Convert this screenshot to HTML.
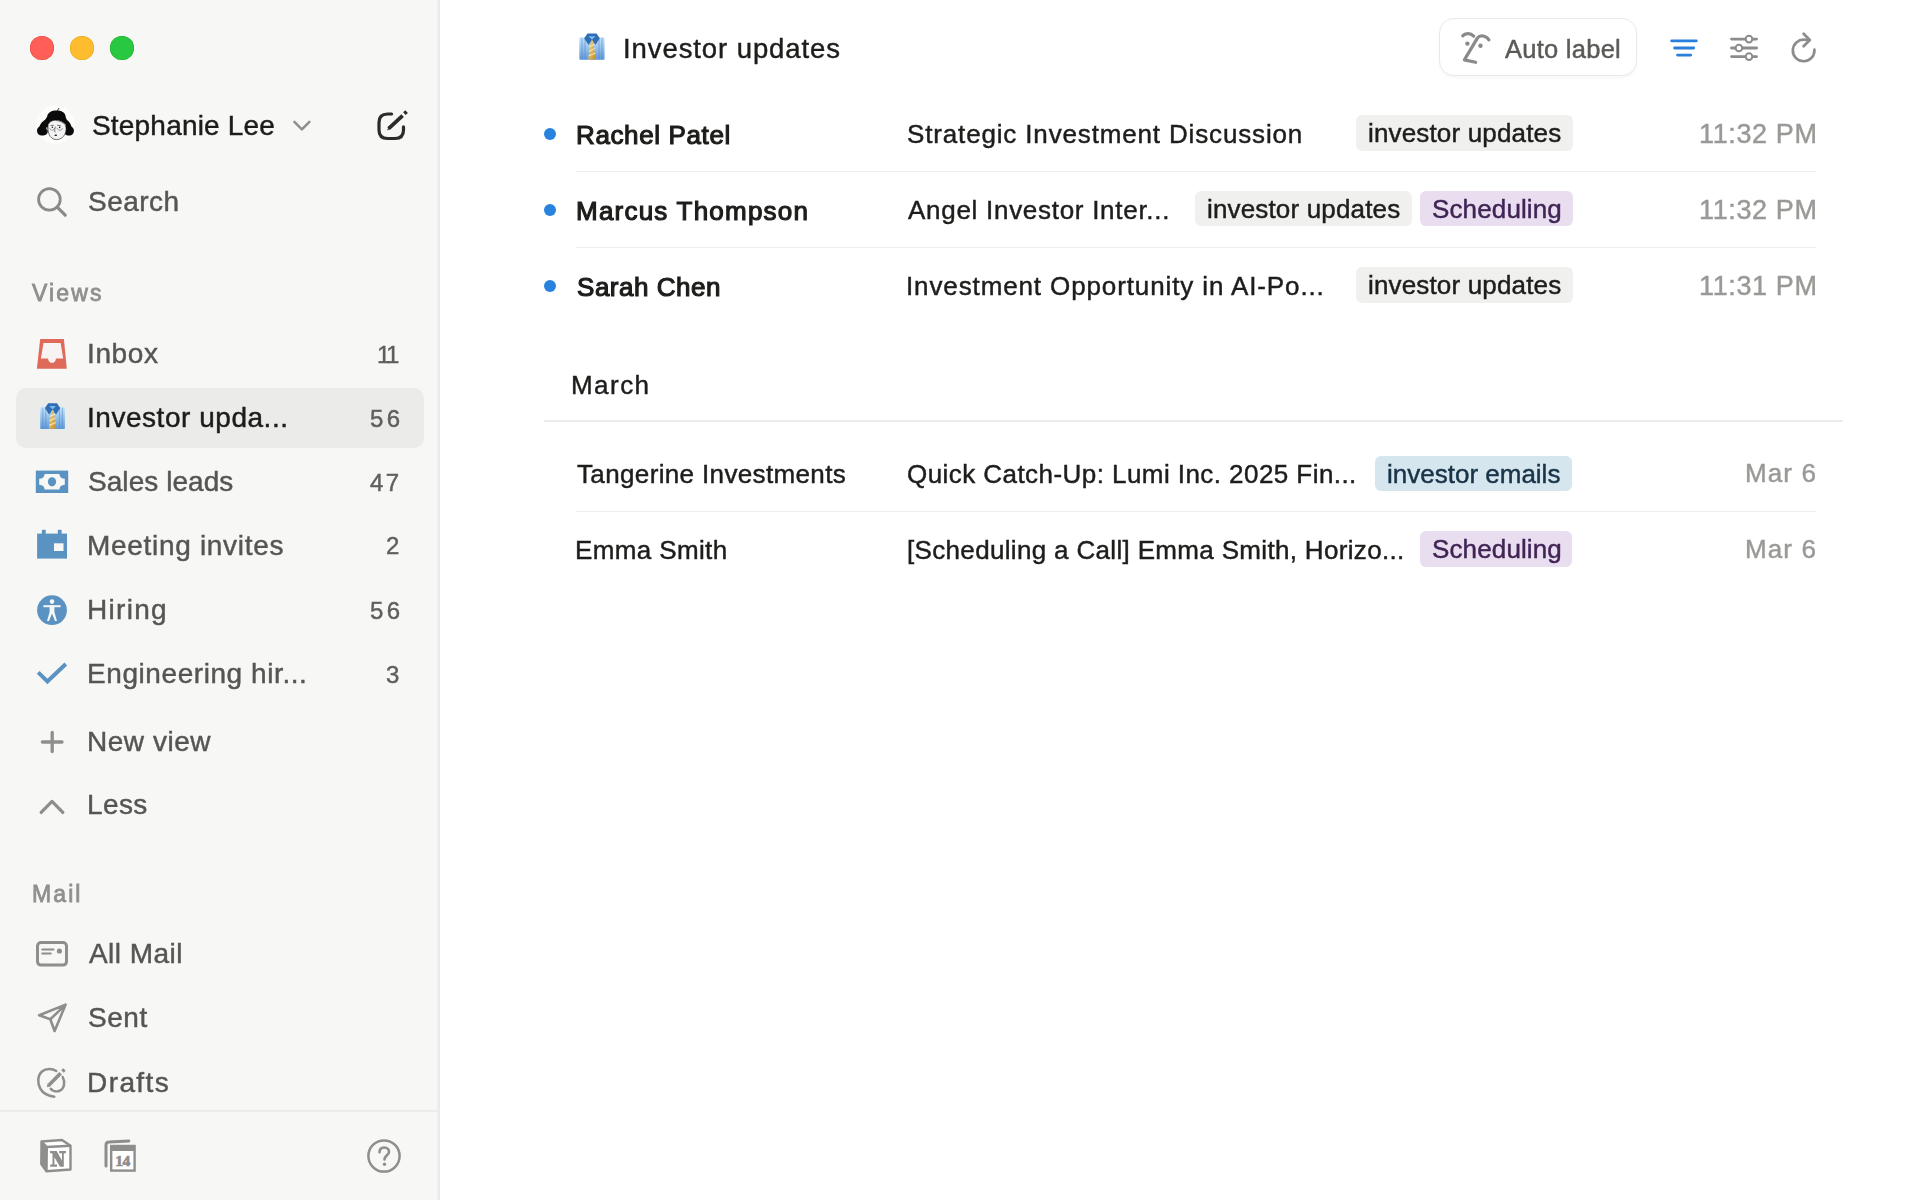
<!DOCTYPE html>
<html><head><meta charset="utf-8"><style>
html,body{margin:0;padding:0;width:1920px;height:1200px;overflow:hidden;background:#fff;}
body{position:relative;font-family:"Liberation Sans",sans-serif;}
#side{position:absolute;left:0;top:0;width:439px;height:1200px;background:#f7f7f5;}
.t{position:absolute;white-space:nowrap;will-change:transform;}
svg{overflow:visible}
</style></head><body>
<div id="side"></div><div style="position:absolute;left:437px;top:0;width:2px;height:1200px;background:linear-gradient(90deg,#f1f1ef,#ebebe9)"></div><div style="position:absolute;left:439px;top:0;width:1px;height:1200px;background:#e9e9e7"></div><div style="position:absolute;left:0;top:1110px;width:439px;height:2px;background:#ececea"></div><div style="position:absolute;left:30px;top:36px;width:24px;height:24px;border-radius:50%;background:#ff5f57;box-shadow:inset 0 0 0 0.5px #e2463f"></div><div style="position:absolute;left:70px;top:36px;width:24px;height:24px;border-radius:50%;background:#febc2e;box-shadow:inset 0 0 0 0.5px #e1a116"></div><div style="position:absolute;left:110px;top:36px;width:24px;height:24px;border-radius:50%;background:#28c840;box-shadow:inset 0 0 0 0.5px #1aab29"></div><svg style="position:absolute;left:30px;top:100px" width="50" height="50" viewBox="0 0 50 50">
<circle cx="25.6" cy="24.6" r="19.4" fill="#fdfdfc"/>
<path d="M27.2 10.8 L29.2 8" stroke="#111" stroke-width="0.9" fill="none"/>
<path d="M26.5 10.6 C31.5 10.6 35.2 12.6 35.6 16.4 C36 18 36.5 19.5 37.6 20.6 C39.5 22.2 40.8 24.5 41.6 26.8 C43.5 28 44.6 30.5 43.6 32.6 C43 34.6 41.5 35.6 39.5 35.4 C37.5 35.8 35.6 35 34.8 33.4 L35.6 24.5 C33 21.6 29 20 25 20.3 C21.5 20.6 19 22.5 18 25.5 L17.6 32.8 C16.6 34.8 14.5 35.8 12 35.4 C9.5 35.6 7.6 34.2 7.2 32 C6.6 29.8 7.6 27.8 9.4 26.6 C10.4 24 12 22 14 20.6 C15.6 19.4 16.6 17.8 17.2 16.2 C18 12.5 21.5 10.6 26.5 10.6 Z" fill="#0b0b0b"/>
<path d="M18.2 24.6 C19.5 21.6 22.5 20.2 25.5 20.4 C29.5 20.6 33.5 22.6 35.4 25 C36.4 27.5 36.4 31 35 34 C33.5 37.5 30 39.6 26.6 39.6 C23 39.6 20.2 37.4 19 34.2 C18 31.5 17.8 27.5 18.2 24.6 Z" fill="#f4f4f4" stroke="#1a1a1a" stroke-width="0.6"/>
<path d="M17.2 26.8 C15.8 27 15.6 29.6 17.6 30.6" fill="#f4f4f4" stroke="#222" stroke-width="0.5"/>
<path d="M20.5 25.6 L23.8 25.2 M27.2 25.2 L30.8 25.8" stroke="#333" stroke-width="0.7"/>
<path d="M19.6 28.2 C20 30 22 30.6 23.6 30 L24.6 27.8 M26.8 27.8 C27.4 30 29.6 30.8 31.4 30 L32.6 28" fill="none" stroke="#555" stroke-width="0.55"/>
<circle cx="22.4" cy="27.2" r="0.8" fill="#222"/><circle cx="29.6" cy="27.4" r="0.8" fill="#222"/>
<path d="M25.4 26.5 L24.5 31.6 L25.8 32" stroke="#333" stroke-width="0.55" fill="none"/>
<ellipse cx="25.8" cy="35.3" rx="1.4" ry="0.8" fill="#1a1a1a"/>
</svg><div class="t" style="font-size:28.00px;line-height:28.00px;top:112.16px;left:92.40px;color:#1c1c1a;letter-spacing:0.193px;-webkit-text-stroke-width:0.45px;">Stephanie Lee</div>
<svg style="position:absolute;left:290px;top:116px" width="24" height="18" viewBox="0 0 24 18"><path d="M4.4 5.8 L11.9 13.3 L19.4 5.8" fill="none" stroke="#8f8f8d" stroke-width="2.5" stroke-linecap="round" stroke-linejoin="round"/></svg><svg style="position:absolute;left:370px;top:104px" width="44" height="44" viewBox="370 104 44 44">
<path d="M391.6 114 H387.5 C382 114 379 117 379 122.5 V130 C379 135.5 382 138.5 387.5 138.5 H395 C400.5 138.5 403.5 135.5 403.5 130 V126.8" fill="none" stroke="#2b2b2a" stroke-width="3.2" stroke-linecap="round"/>
<path d="M388.6 128.6 L402.6 115.6" fill="none" stroke="#2b2b2a" stroke-width="3.8" stroke-linecap="butt"/>
<path d="M387 130.6 L388.9 126.6 L390.7 128.6 Z" fill="#2b2b2a"/>
<path d="M404.4 113.6 L406.6 111.6" fill="none" stroke="#2b2b2a" stroke-width="3.8" stroke-linecap="butt"/>
</svg><svg style="position:absolute;left:30px;top:180px" width="44" height="44" viewBox="0 0 44 44"><circle cx="19.4" cy="19.4" r="10.8" fill="none" stroke="#8a8a88" stroke-width="2.8"/><path d="M27.2 27.2 L35.2 35.2" stroke="#8a8a88" stroke-width="3.2" stroke-linecap="round"/></svg><div class="t" style="font-size:28.00px;line-height:28.00px;top:188.36px;left:88.20px;color:#555554;letter-spacing:0.450px;-webkit-text-stroke-width:0.45px;">Search</div>
<div class="t" style="font-size:23.00px;line-height:23.00px;top:282.28px;left:32.29px;color:#8f8f8d;letter-spacing:2.145px;-webkit-text-stroke-width:0.80px;">Views</div>
<div style="position:absolute;left:16px;top:388px;width:408px;height:60px;border-radius:10px;background:#ebebea"></div><div class="t" style="font-size:28.00px;line-height:28.00px;top:340.36px;left:87.30px;color:#555554;letter-spacing:0.618px;-webkit-text-stroke-width:0.45px;">Inbox</div>
<div class="t" style="font-size:24.00px;line-height:24.00px;top:342.55px;left:376.91px;color:#5f5f5d;letter-spacing:-2.635px;-webkit-text-stroke-width:0.45px;">11</div>
<div class="t" style="font-size:28.00px;line-height:28.00px;top:404.36px;left:87.30px;color:#1c1c1a;letter-spacing:0.533px;-webkit-text-stroke-width:0.45px;">Investor upda...</div>
<div class="t" style="font-size:24.00px;line-height:24.00px;top:406.55px;left:369.69px;color:#5f5f5d;letter-spacing:3.350px;-webkit-text-stroke-width:0.45px;">56</div>
<div class="t" style="font-size:28.00px;line-height:28.00px;top:468.36px;left:88.30px;color:#555554;letter-spacing:0.060px;-webkit-text-stroke-width:0.45px;">Sales leads</div>
<div class="t" style="font-size:24.00px;line-height:24.00px;top:470.55px;left:370.10px;color:#5f5f5d;letter-spacing:2.287px;-webkit-text-stroke-width:0.45px;">47</div>
<div class="t" style="font-size:28.00px;line-height:28.00px;top:532.16px;left:87.30px;color:#555554;letter-spacing:0.692px;-webkit-text-stroke-width:0.45px;">Meeting invites</div>
<div class="t" style="font-size:24.00px;line-height:24.00px;top:534.29px;left:386.24px;color:#5f5f5d;-webkit-text-stroke-width:0.45px;">2</div>
<div class="t" style="font-size:28.00px;line-height:28.00px;top:596.36px;left:87.30px;color:#555554;letter-spacing:1.308px;-webkit-text-stroke-width:0.45px;">Hiring</div>
<div class="t" style="font-size:24.00px;line-height:24.00px;top:598.55px;left:369.69px;color:#5f5f5d;letter-spacing:3.350px;-webkit-text-stroke-width:0.45px;">56</div>
<div class="t" style="font-size:28.00px;line-height:28.00px;top:660.36px;left:87.30px;color:#555554;letter-spacing:0.574px;-webkit-text-stroke-width:0.45px;">Engineering hir...</div>
<div class="t" style="font-size:24.00px;line-height:24.00px;top:662.50px;left:385.90px;color:#5f5f5d;-webkit-text-stroke-width:0.45px;">3</div>
<div class="t" style="font-size:28.00px;line-height:28.00px;top:728.36px;left:87.20px;color:#555554;letter-spacing:0.541px;-webkit-text-stroke-width:0.45px;">New view</div>
<div class="t" style="font-size:28.00px;line-height:28.00px;top:791.26px;left:87.20px;color:#555554;letter-spacing:0.382px;-webkit-text-stroke-width:0.45px;">Less</div>
<div class="t" style="font-size:23.00px;line-height:23.00px;top:882.58px;left:32.30px;color:#8f8f8d;letter-spacing:2.098px;-webkit-text-stroke-width:0.80px;">Mail</div>
<div class="t" style="font-size:28.00px;line-height:28.00px;top:940.36px;left:88.61px;color:#555554;letter-spacing:0.447px;-webkit-text-stroke-width:0.45px;">All Mail</div>
<div class="t" style="font-size:28.00px;line-height:28.00px;top:1003.83px;left:87.50px;color:#555554;letter-spacing:0.525px;-webkit-text-stroke-width:0.45px;">Sent</div>
<div class="t" style="font-size:28.00px;line-height:28.00px;top:1068.78px;left:86.50px;color:#555554;letter-spacing:1.418px;-webkit-text-stroke-width:0.45px;">Drafts</div>
<svg style="position:absolute;left:30px;top:330px" width="44" height="48" viewBox="30 330 44 48">
<path d="M40.2 339.1 L63.9 339.1 L66.8 368.7 L36.9 368.7 Z" fill="#e06a5a"/>
<path d="M43.5 343.1 L60.6 343.1 L63.2 358.4 L56 358.4 C55.6 361.5 54 362.8 52 362.8 C50 362.8 48.4 361.5 48 358.4 L40.9 358.4 Z" fill="#f7f3f2"/>
</svg><svg style="position:absolute;left:34.87px;top:397.72px" width="35.17" height="35.17" viewBox="0 0 36 36">
<defs><linearGradient id="sg50" x1="0" y1="0" x2="0" y2="1"><stop offset="0" stop-color="#c9e6fb"/><stop offset="1" stop-color="#5f98da"/></linearGradient>
<linearGradient id="tg50" x1="0" y1="0" x2="1" y2="1"><stop offset="0" stop-color="#f3d58a"/><stop offset="1" stop-color="#c48f25"/></linearGradient></defs>
<path d="M5.3 10.5 Q5.3 9.3 6.5 9.3 L29.4 9.3 Q30.6 9.3 30.6 10.5 L30.6 30.6 Q30.6 31.8 29.4 31.8 L6.5 31.8 Q5.3 31.8 5.3 30.6 Z" fill="url(#sg50)"/>
<path d="M8 10 V31.5 M11 10 V31.5 M25 10 V31.5 M28 10 V31.5" stroke="#4d86c8" stroke-width="0.9" opacity="0.6"/>
<path d="M10.2 10.2 L13.5 5.4 L22.5 5.4 L25.8 10.2 L21.6 16.8 L18 12.8 L14.4 16.8 Z" fill="#2f6db5"/>
<path d="M14.6 8.2 L21.4 8.2 L18 11.8 Z" fill="#7fb8ee"/>
<path d="M17 12.6 L19 12.6 L21.8 31.6 L14.2 31.6 Z" fill="url(#tg50)"/>
<path d="M15.2 19 L20.4 16.5 M14.8 23.5 L20.9 20.5 M14.5 28 L21.3 25" stroke="#fff2c8" stroke-width="1.2" opacity="0.8"/>
</svg><svg style="position:absolute;left:30px;top:465px" width="44" height="34" viewBox="30 465 44 34">
<rect x="35.8" y="470.6" width="32.4" height="22.4" fill="#5a93c2"/>
<path d="M44.6 474 L59.4 474 Q59.6 478.6 64.8 478.8 L64.8 484.8 Q59.6 485.2 59.4 489.4 L44.6 489.4 Q44.4 485.2 39.2 484.8 L39.2 478.8 Q44.4 478.6 44.6 474 Z" fill="#f7f7f5"/>
<ellipse cx="52" cy="481.8" rx="4.1" ry="4.6" fill="#5a93c2"/>
</svg><svg style="position:absolute;left:30px;top:525px" width="44" height="40" viewBox="30 525 44 40">
<rect x="37.1" y="533.6" width="29.9" height="25" fill="#5a93c2"/>
<rect x="41.9" y="529.8" width="3.8" height="5" fill="#5a93c2"/>
<rect x="57.8" y="529.8" width="3.8" height="5" fill="#5a93c2"/>
<rect x="54" y="543.3" width="9.5" height="7.7" fill="#f7f7f5"/>
</svg><svg style="position:absolute;left:30px;top:590px" width="44" height="40" viewBox="30 590 44 40">
<circle cx="52" cy="610.2" r="14.9" fill="#5a93c2"/>
<circle cx="52" cy="601.6" r="2.3" fill="#f7f7f5"/>
<path d="M43.4 606.2 L60.6 606.2" stroke="#f7f7f5" stroke-width="2" stroke-linecap="butt"/>
<path d="M49.6 605.5 L54.4 605.5 L54.4 612 L57 621 L55 621 L52 613.5 L49 621 L47 621 L49.6 612 Z" fill="#f7f7f5"/>
</svg><svg style="position:absolute;left:30px;top:655px" width="44" height="36" viewBox="30 655 44 36"><path d="M38.2 672.4 L47.4 681.4 L65.8 664" fill="none" stroke="#5a93c2" stroke-width="4" stroke-linecap="butt"/></svg><svg style="position:absolute;left:30px;top:720px" width="44" height="44" viewBox="30 720 44 44"><path d="M52.2 732.4 V751.6 M42.4 742 H62" stroke="#8e8e8c" stroke-width="3.3" stroke-linecap="round"/></svg><svg style="position:absolute;left:30px;top:790px" width="44" height="34" viewBox="30 790 44 34"><path d="M41.2 812.4 L52 801.4 L62.8 812.4" fill="none" stroke="#8e8e8c" stroke-width="3.3" stroke-linecap="round" stroke-linejoin="round"/></svg><svg style="position:absolute;left:30px;top:935px" width="44" height="38" viewBox="30 935 44 38">
<rect x="37.5" y="942.5" width="29" height="22.6" rx="3.5" fill="none" stroke="#8e8e8c" stroke-width="3"/>
<path d="M42.2 949.4 H53.5 M42.2 953.6 H50.8" stroke="#8e8e8c" stroke-width="2" stroke-linecap="round"/>
<circle cx="59.4" cy="951" r="2.6" fill="#8e8e8c"/>
</svg><svg style="position:absolute;left:30px;top:995px" width="44" height="44" viewBox="30 995 44 44">
<path d="M65.6 1004.6 L39.2 1015.3 L50.3 1019.3 L54.6 1031 Z M50.3 1019.3 L65.6 1004.6" fill="none" stroke="#8e8e8c" stroke-width="2.6" stroke-linejoin="round" stroke-linecap="round"/>
</svg><svg style="position:absolute;left:30px;top:1060px" width="44" height="44" viewBox="30 1060 44 44">
<path d="M56.3 1071 C52.5 1068.3 46 1068 42 1071.5 C37.3 1075.5 37.3 1084 40.5 1089 C43.5 1094 49 1096 54.3 1096.7" fill="none" stroke="#8e8e8c" stroke-width="2.5" stroke-linecap="round"/>
<path d="M48.8 1085.2 L60.6 1073.2" fill="none" stroke="#8e8e8c" stroke-width="3.6" stroke-linecap="butt"/>
<path d="M46.9 1087.3 L47.5 1083.4 L50.6 1086.6 Z" fill="#8e8e8c"/>
<path d="M62.4 1071.4 L64.4 1069.4" fill="none" stroke="#8e8e8c" stroke-width="3.6" stroke-linecap="butt"/>
<path d="M50.8 1088.8 C53 1091.3 57 1092 60.2 1090.5 C64.2 1088.5 65.5 1082.5 62.7 1077" fill="none" stroke="#8e8e8c" stroke-width="2.5" stroke-linecap="round"/>
</svg><svg style="position:absolute;left:36px;top:1136px" width="40" height="40" viewBox="36 1136 40 40">
<path d="M41.5 1141.5 L62 1140 L70.5 1145.8 L70.5 1169.5 L46.5 1171.3 L41.3 1164 Z" fill="#fff" stroke="#8e8e8c" stroke-width="2.4" stroke-linejoin="round"/>
<path d="M41.5 1141.5 L46.8 1147 L70.5 1145.8 M46.8 1147 L46.5 1171.3" fill="none" stroke="#8e8e8c" stroke-width="2.4" stroke-linejoin="round"/>
<path d="M42 1142.5 L46.2 1147.5 L46 1169.5 L42 1164 Z" fill="#8e8e8c"/>
<path d="M50 1151 H56.6 L62 1160.6 V1153.2 H59.2 V1151 H66 V1153.2 H63.8 V1166.8 H60 L54.4 1157.2 V1164.6 H57 V1166.8 H50.2 V1164.6 H52.5 V1153.6 L51.8 1153.2 H50 Z" fill="#8e8e8c"/>
</svg><svg style="position:absolute;left:100px;top:1136px" width="40" height="40" viewBox="100 1136 40 40">
<path d="M106 1166 L106 1145 C106 1143 107 1142 109 1142 L128.8 1141" fill="none" stroke="#8e8e8c" stroke-width="3" stroke-linecap="round"/>
<rect x="111.2" y="1146" width="23.4" height="24.6" fill="#fff" stroke="#8e8e8c" stroke-width="2.4"/>
<rect x="111.2" y="1146" width="23.4" height="5" fill="#8e8e8c"/>
<text x="122.6" y="1166" font-family="Liberation Serif" font-weight="700" font-size="15.5" fill="#8e8e8c" stroke="#8e8e8c" stroke-width="0.7" text-anchor="middle" letter-spacing="-0.5">14</text>
</svg><svg style="position:absolute;left:362px;top:1134px" width="44" height="44" viewBox="362 1134 44 44">
<circle cx="384" cy="1156" r="15.6" fill="none" stroke="#8e8e8c" stroke-width="2.5"/>
<path d="M379.5 1152.3 C379.5 1149 381.5 1147.5 384.2 1147.5 C387 1147.5 389 1149.3 389 1152 C389 1155.3 384.5 1155.5 384.5 1159.5" fill="none" stroke="#8e8e8c" stroke-width="2.6" stroke-linecap="round"/>
<circle cx="384.5" cy="1164.3" r="1.7" fill="#8e8e8c"/>
</svg><svg style="position:absolute;left:574.00px;top:28.00px" width="36.00" height="36.00" viewBox="0 0 36 36">
<defs><linearGradient id="sg1382" x1="0" y1="0" x2="0" y2="1"><stop offset="0" stop-color="#c9e6fb"/><stop offset="1" stop-color="#5f98da"/></linearGradient>
<linearGradient id="tg1382" x1="0" y1="0" x2="1" y2="1"><stop offset="0" stop-color="#f3d58a"/><stop offset="1" stop-color="#c48f25"/></linearGradient></defs>
<path d="M5.3 10.5 Q5.3 9.3 6.5 9.3 L29.4 9.3 Q30.6 9.3 30.6 10.5 L30.6 30.6 Q30.6 31.8 29.4 31.8 L6.5 31.8 Q5.3 31.8 5.3 30.6 Z" fill="url(#sg1382)"/>
<path d="M8 10 V31.5 M11 10 V31.5 M25 10 V31.5 M28 10 V31.5" stroke="#4d86c8" stroke-width="0.9" opacity="0.6"/>
<path d="M10.2 10.2 L13.5 5.4 L22.5 5.4 L25.8 10.2 L21.6 16.8 L18 12.8 L14.4 16.8 Z" fill="#2f6db5"/>
<path d="M14.6 8.2 L21.4 8.2 L18 11.8 Z" fill="#7fb8ee"/>
<path d="M17 12.6 L19 12.6 L21.8 31.6 L14.2 31.6 Z" fill="url(#tg1382)"/>
<path d="M15.2 19 L20.4 16.5 M14.8 23.5 L20.9 20.5 M14.5 28 L21.3 25" stroke="#fff2c8" stroke-width="1.2" opacity="0.8"/>
</svg><div class="t" style="font-size:27.50px;line-height:27.50px;top:34.83px;left:622.90px;color:#1d1d1b;letter-spacing:0.914px;-webkit-text-stroke-width:0.45px;">Investor updates</div>
<div style="position:absolute;left:1439px;top:18px;width:198px;height:58px;box-sizing:border-box;border:1.5px solid #e9e9e7;border-radius:15px;background:#fff;box-shadow:0 2px 3px rgba(0,0,0,0.035)"></div><svg style="position:absolute;left:1455px;top:25px" width="40" height="45" viewBox="1455 25 40 45">
<path d="M1462.7 35.9 C1465 33.3 1470 32.2 1473.7 36.2" fill="none" stroke="#8a8a88" stroke-width="3.2" stroke-linecap="round"/>
<path d="M1488.9 39.8 C1486 35.5 1480 34.5 1477.5 37.9 L1464.4 59.9 L1475.6 62.3" fill="none" stroke="#8a8a88" stroke-width="3.2" stroke-linecap="round" stroke-linejoin="round"/>
<circle cx="1467.4" cy="43.6" r="2.2" fill="#8a8a88"/>
<circle cx="1480.5" cy="45.8" r="2.2" fill="#8a8a88"/>
</svg><div class="t" style="font-size:25.50px;line-height:25.50px;top:36.73px;left:1504.62px;color:#5b5a57;letter-spacing:0.258px;-webkit-text-stroke-width:0.45px;">Auto label</div>
<svg style="position:absolute;left:1660px;top:30px" width="48" height="36" viewBox="1660 30 48 36"><path d="M1671.6 40.8 H1696.4 M1674.6 48 H1693.7 M1677.5 55.1 H1690.7" stroke="#2a7fdc" stroke-width="2.8" stroke-linecap="round"/></svg><svg style="position:absolute;left:1722px;top:30px" width="44" height="36" viewBox="1722 30 44 36">
<path d="M1731.5 39.1 H1756.6 M1731.5 48 H1756.6 M1731.5 56.6 H1756.6" stroke="#8c8c8a" stroke-width="2.8" stroke-linecap="round"/>
<circle cx="1749" cy="39.1" r="3.3" fill="#fff" stroke="#8c8c8a" stroke-width="2"/>
<circle cx="1738.9" cy="48" r="3.3" fill="#fff" stroke="#8c8c8a" stroke-width="2"/>
<circle cx="1749" cy="56.6" r="3.3" fill="#fff" stroke="#8c8c8a" stroke-width="2"/>
</svg><svg style="position:absolute;left:1780px;top:25px" width="48" height="48" viewBox="1780 25 48 48">
<path d="M1814.4 49.6 A10.8 10.8 0 1 1 1804.5 39.7 Q1807.5 39.8 1809.4 40" fill="none" stroke="#8c8c8a" stroke-width="2.7" stroke-linecap="round"/>
<path d="M1803.6 33.8 L1809.8 40 L1803.6 46.2" fill="none" stroke="#8c8c8a" stroke-width="2.7" stroke-linecap="round" stroke-linejoin="round"/>
</svg><div style="position:absolute;left:543.75px;top:127.50px;width:12.5px;height:12.5px;border-radius:50%;background:#2783de"></div><div class="t" style="font-size:26.00px;line-height:26.00px;top:121.53px;left:576.36px;color:#1d1d1b;letter-spacing:0.620px;-webkit-text-stroke-width:1.15px;">Rachel Patel</div>
<div class="t" style="font-size:26.00px;line-height:26.00px;top:121.05px;left:906.53px;color:#1d1d1b;letter-spacing:0.845px;-webkit-text-stroke-width:0.45px;">Strategic Investment Discussion</div>
<div style="position:absolute;left:1356.0px;top:115.0px;width:217.0px;height:35.6px;border-radius:6px;background:#f0f0ee"></div><div class="t" style="font-size:26.00px;line-height:26.00px;top:120.15px;left:1368.00px;color:#1d1d1b;letter-spacing:0.158px;-webkit-text-stroke-width:0.45px;">investor updates</div>
<div class="t" style="font-size:27.00px;line-height:27.00px;top:121.01px;left:1698.72px;color:#9a9996;letter-spacing:0.623px;-webkit-text-stroke-width:0.45px;">11:32 PM</div>
<div style="position:absolute;left:576px;top:170.7px;width:1240px;height:1.6px;background:#efefed"></div><div style="position:absolute;left:543.75px;top:203.50px;width:12.5px;height:12.5px;border-radius:50%;background:#2783de"></div><div class="t" style="font-size:26.00px;line-height:26.00px;top:197.53px;left:576.36px;color:#1d1d1b;letter-spacing:1.223px;-webkit-text-stroke-width:1.15px;">Marcus Thompson</div>
<div class="t" style="font-size:26.00px;line-height:26.00px;top:197.05px;left:907.62px;color:#1d1d1b;letter-spacing:0.716px;-webkit-text-stroke-width:0.45px;">Angel Investor Inter...</div>
<div style="position:absolute;left:1195.0px;top:191.0px;width:216.7px;height:35.4px;border-radius:6px;background:#f0f0ee"></div><div class="t" style="font-size:26.00px;line-height:26.00px;top:196.35px;left:1207.00px;color:#1d1d1b;letter-spacing:0.158px;-webkit-text-stroke-width:0.45px;">investor updates</div>
<div style="position:absolute;left:1420.2px;top:191.0px;width:152.9px;height:35.4px;border-radius:6px;background:#e8def0"></div><div class="t" style="font-size:26.00px;line-height:26.00px;top:196.35px;left:1432.13px;color:#412454;letter-spacing:0.131px;-webkit-text-stroke-width:0.45px;">Scheduling</div>
<div class="t" style="font-size:27.00px;line-height:27.00px;top:197.01px;left:1698.72px;color:#9a9996;letter-spacing:0.623px;-webkit-text-stroke-width:0.45px;">11:32 PM</div>
<div style="position:absolute;left:576px;top:246.7px;width:1240px;height:1.6px;background:#efefed"></div><div style="position:absolute;left:543.75px;top:279.50px;width:12.5px;height:12.5px;border-radius:50%;background:#2783de"></div><div class="t" style="font-size:26.00px;line-height:26.00px;top:273.73px;left:577.30px;color:#1d1d1b;letter-spacing:0.535px;-webkit-text-stroke-width:1.15px;">Sarah Chen</div>
<div class="t" style="font-size:26.00px;line-height:26.00px;top:273.05px;left:905.50px;color:#1d1d1b;letter-spacing:0.881px;-webkit-text-stroke-width:0.45px;">Investment Opportunity in AI-Po...</div>
<div style="position:absolute;left:1356.0px;top:267.0px;width:217.0px;height:35.6px;border-radius:6px;background:#f0f0ee"></div><div class="t" style="font-size:26.00px;line-height:26.00px;top:272.15px;left:1368.00px;color:#1d1d1b;letter-spacing:0.158px;-webkit-text-stroke-width:0.45px;">investor updates</div>
<div class="t" style="font-size:27.00px;line-height:27.00px;top:273.01px;left:1698.72px;color:#9a9996;letter-spacing:0.623px;-webkit-text-stroke-width:0.45px;">11:31 PM</div>
<div class="t" style="font-size:26.00px;line-height:26.00px;top:372.20px;left:571.17px;color:#1d1d1b;letter-spacing:1.460px;-webkit-text-stroke-width:0.45px;">March</div>
<div style="position:absolute;left:544px;top:419.6px;width:1299px;height:2.0px;background:#ebebe9"></div><div class="t" style="font-size:26.00px;line-height:26.00px;top:461.05px;left:576.50px;color:#1d1d1b;letter-spacing:0.359px;-webkit-text-stroke-width:0.45px;">Tangerine Investments</div>
<div class="t" style="font-size:26.00px;line-height:26.00px;top:461.05px;left:906.50px;color:#1d1d1b;letter-spacing:0.440px;-webkit-text-stroke-width:0.45px;">Quick Catch-Up: Lumi Inc. 2025 Fin...</div>
<div style="position:absolute;left:1375.1px;top:455.5px;width:197.2px;height:35.2px;border-radius:6px;background:#d6e6ef"></div><div class="t" style="font-size:26.00px;line-height:26.00px;top:460.55px;left:1387.30px;color:#183347;-webkit-text-stroke-width:0.45px;">investor emails</div>
<div class="t" style="font-size:26.00px;line-height:26.00px;top:460.15px;left:1744.79px;color:#9a9996;letter-spacing:1.127px;-webkit-text-stroke-width:0.45px;">Mar 6</div>
<div style="position:absolute;left:576px;top:510.7px;width:1240px;height:1.6px;background:#efefed"></div><div class="t" style="font-size:26.00px;line-height:26.00px;top:537.05px;left:574.67px;color:#1d1d1b;letter-spacing:0.371px;-webkit-text-stroke-width:0.45px;">Emma Smith</div>
<div class="t" style="font-size:26.00px;line-height:26.00px;top:537.05px;left:906.80px;color:#1d1d1b;letter-spacing:0.331px;-webkit-text-stroke-width:0.45px;">[Scheduling a Call] Emma Smith, Horizo...</div>
<div style="position:absolute;left:1420.0px;top:531.0px;width:152.3px;height:35.8px;border-radius:6px;background:#e8def0"></div><div class="t" style="font-size:26.00px;line-height:26.00px;top:536.45px;left:1432.03px;color:#412454;letter-spacing:0.131px;-webkit-text-stroke-width:0.45px;">Scheduling</div>
<div class="t" style="font-size:26.00px;line-height:26.00px;top:536.15px;left:1744.79px;color:#9a9996;letter-spacing:1.127px;-webkit-text-stroke-width:0.45px;">Mar 6</div>
</body></html>
